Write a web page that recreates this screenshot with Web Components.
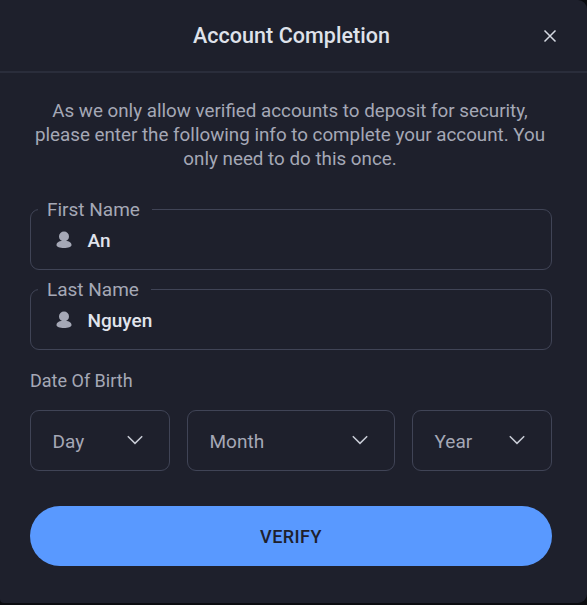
<!DOCTYPE html>
<html>
<head>
<meta charset="utf-8">
<title>Account Completion</title>
<style>
html, body { margin: 0; background: #0b0c10; }
body { width: 587px; height: 605px; overflow: hidden; font-family: Roboto, "Liberation Sans", sans-serif; }
</style>
</head>
<body>
<completion-modal title-text="Account Completion">
  <p>As we only allow verified accounts to deposit for security, please enter the following info to complete your account. You only need to do this once.</p>
  <name-field label="First Name" value="An"></name-field>
  <name-field label="Last Name" value="Nguyen"></name-field>
  <dob-row>
    <date-select style="width:140px">Day</date-select>
    <date-select style="width:208px">Month</date-select>
    <date-select style="width:140px">Year</date-select>
  </dob-row>
  <verify-button>VERIFY</verify-button>
</completion-modal>

<script>
"use strict";

class CompletionModal extends HTMLElement {
  constructor() {
    super();
    this.attachShadow({mode: 'open'}).innerHTML = `
<style>
:host { display: block; width: 587px; height: 602.5px; box-sizing: border-box; background: #1e202c; border-radius: 0 9px 9px 4px; overflow: hidden; }
header { height: 71px; border-bottom: 2px solid #2a2d3b; display: flex; align-items: center; justify-content: center; position: relative; }
h1 { margin: 0 4px 0 0; font-size: 21.5px; font-weight: 500; color: #dfe2ea; letter-spacing: .05px; }
button { position: absolute; right: 29px; top: 28px; width: 16px; height: 16px; padding: 0; border: 0; background: none; display: flex; }
main { padding: 26px 35px 0 30px; }
::slotted(p) { margin: 0 0 38px; padding-right: 2px; font-size: 18.8px; line-height: 24px; text-align: center; color: #a5a8b6; }
</style>
<header>
  <h1></h1>
  <button aria-label="Close"><svg width="16" height="16" viewBox="0 0 16 16" fill="none" stroke="#d5d9e2" stroke-width="1.5"><path d="M2.5 2.5l11 11M13.5 2.5l-11 11"/></svg></button>
</header>
<main><slot></slot></main>`;
    this.shadowRoot.querySelector('h1').textContent = this.getAttribute('title-text');
  }
}

class NameField extends HTMLElement {
  constructor() {
    super();
    this.attachShadow({mode: 'open'}).innerHTML = `
<style>
:host { display: flex; align-items: center; gap: 15px; position: relative; height: 61px; box-sizing: border-box; margin-bottom: 19px; padding: 2.5px 0 0 23.5px; border: 1.5px solid #404456; border-radius: 9px; }
span { position: absolute; left: 7px; top: -12.5px; padding: 0 12px 0 9px; background: #1e202c; font-size: 19px; line-height: 24px; color: #a5a8b6; }
svg { display: block; margin-top: -2px; }
b { font-size: 19px; font-weight: 500; color: #e1e4ec; }
</style>
<span></span>
<svg width="18" height="18" viewBox="0 0 18 18" fill="#a5a8b6"><circle cx="9" cy="5.5" r="5"/><path d="M1.5 14c0-2.800 3.300-4.200 7.500-4.200s7.500 1.400 7.500 4.200c0 1.800-3.300 3-7.500 3s-7.500-1.200-7.500-3z"/></svg>
<b></b>`;
    this.shadowRoot.querySelector('span').textContent = this.getAttribute('label');
    this.shadowRoot.querySelector('b').textContent = this.getAttribute('value');
  }
}

class DobRow extends HTMLElement {
  constructor() {
    super();
    this.attachShadow({mode: 'open'}).innerHTML = `
<style>
:host { display: block; }
label { display: block; font-size: 18px; line-height: 24px; color: #a5a8b6; margin-bottom: 17px; }
div { display: flex; gap: 17px; }
</style>
<label>Date Of Birth</label>
<div><slot></slot></div>`;
  }
}

class DateSelect extends HTMLElement {
  constructor() {
    super();
    this.attachShadow({mode: 'open'}).innerHTML = `
<style>
:host { display: flex; align-items: center; justify-content: space-between; height: 61px; box-sizing: border-box; border: 1.5px solid #404456; border-radius: 9px; padding: 2px 26px 0 21.5px; font-size: 19px; color: #a5a8b6; }
svg { display: block; margin-top: -4px; }
</style>
<slot></slot>
<svg width="16" height="10" viewBox="0 0 16 10" fill="none" stroke="#c9ccd6" stroke-width="1.5"><path d="M.8 1.2L8 8.4l7.2-7.2"/></svg>`;
  }
}

class VerifyButton extends HTMLElement {
  constructor() {
    super();
    this.attachShadow({mode: 'open'}).innerHTML = `
<style>
:host { display: flex; align-items: center; justify-content: center; width: 522px; height: 60px; margin-top: 35px; border-radius: 30px; background: #5999ff; color: #1e202c; font-size: 18px; font-weight: 500; letter-spacing: .45px; }
</style>
<slot></slot>`;
  }
}

customElements.define('completion-modal', CompletionModal);
customElements.define('name-field', NameField);
customElements.define('dob-row', DobRow);
customElements.define('date-select', DateSelect);
customElements.define('verify-button', VerifyButton);
</script>
</body>
</html>
